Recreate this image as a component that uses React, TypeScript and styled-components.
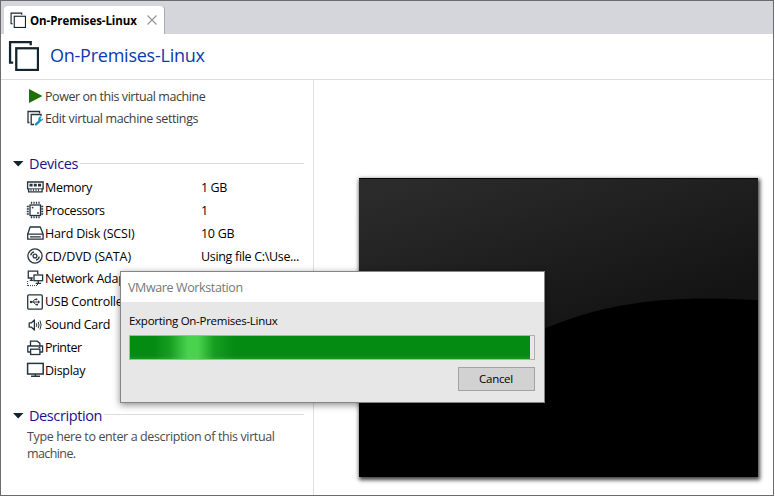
import React from "react";
import styled, { createGlobalStyle } from "styled-components";

const GlobalStyle = createGlobalStyle`
  *, *::before, *::after { box-sizing: border-box; }
  body { margin: 0; background: #fff; }
`;

const Window = styled.div`
  position: relative;
  display: flex;
  flex-direction: column;
  width: 774px;
  height: 496px;
  overflow: hidden;
  background: #fff;
  border: solid #6b6b6e;
  border-width: 1px;
  font-family: "Open Sans", "Noto Sans", sans-serif;
  color: #000;
`;

const Label = styled.span<{ $size?: number; $track?: number; $color?: string; $weight?: number }>`
  font-size: ${(p) => p.$size ?? 12.5}px;
  letter-spacing: ${(p) => p.$track ?? 0}px;
  color: ${(p) => p.$color ?? "inherit"};
  font-weight: ${(p) => p.$weight ?? 400};
  white-space: pre;
`;

const TabBar = styled.div`
  flex: none;
  height: 33px;
  padding: 5px 0 0 3px;
  background: #d5d6db;
`;

const Tab = styled.div`
  display: flex;
  align-items: center;
  width: 161px;
  height: 28px;
  padding-left: 6px;
  background: #fff;
  border-right: 1px solid #a9aaae;
  border-radius: 4px 4px 0 0;
`;

const TabTitle = styled.div`
  display: flex;
  width: 116px;
  margin-left: 4px;
  padding-top: 1px;
`;

const Header = styled.header`
  flex: none;
  display: flex;
  align-items: center;
  gap: 11px;
  height: 46px;
  padding: 0 0 2px 7px;
  border-bottom: 1px solid #dedede;
`;

const HeaderTitle = styled.h1`
  display: flex;
  margin: -1px 0 0;
  line-height: 28px;
`;

const Content = styled.div`
  flex: 1;
  display: flex;
`;

const Sidebar = styled.aside`
  width: 313px;
  padding-top: 5px;
  border-right: 1px solid #dfdfdf;
`;

const Action = styled.div`
  display: flex;
  align-items: center;
  height: 22px;
  padding-left: 25px;
`;

const IconSlot = styled.span`
  display: flex;
  flex: none;
  align-items: center;
  width: 19px;
  height: 20px;
`;

const Section = styled.section<{ $top: number }>`
  padding-top: ${(p) => p.$top}px;
`;

const SectionHead = styled.div`
  display: flex;
  align-items: center;
  height: 24px;
  padding: 0 9px 0 11px;
`;

const SectionName = styled.h2`
  display: flex;
  margin: 0 2px 0 5px;
  line-height: 22px;
`;

const Rule = styled.span`
  flex: 1;
  height: 1px;
  margin-top: -2px;
  background: #dcdcdc;
`;

const DeviceRow = styled.div`
  display: flex;
  align-items: center;
  height: 22.875px;
  padding-left: 25px;
`;

const DeviceName = styled.div`
  display: flex;
  width: 156px;
`;

const Note = styled.div`
  display: flex;
  flex-direction: column;
  padding: 0 0 0 26px;
  line-height: 17.5px;
`;

const Preview = styled.main`
  flex: 1;
  padding: 98px 0 0 45px;
`;

const Screen = styled.div`
  width: 399px;
  height: 299px;
  background: #000;
  box-shadow: 1px 2px 4px 1px rgba(0, 0, 0, 0.75);
`;

const Dialog = styled.div`
  position: absolute;
  left: 119px;
  top: 270px;
  width: 425px;
  height: 132px;
  background: #e7e7e7;
  border: 1px solid #858585;
  box-shadow: 0 2px 7px rgba(0, 0, 0, 0.45);
`;

const DialogTitle = styled.div`
  display: flex;
  align-items: center;
  height: 30px;
  padding-left: 7px;
  background: #fff;
`;

const DialogBody = styled.div`
  display: flex;
  flex-direction: column;
  padding: 8px 9px 0 8px;
`;

const Message = styled.div`
  display: flex;
  align-items: center;
  height: 20px;
  margin-bottom: 5px;
`;

const Track = styled.div`
  height: 25px;
  border: 1px solid #b0b0b0;
  background: #e8e8e8;
`;

const Fill = styled.div`
  height: 23px;
  width: 400px;
  background:
    linear-gradient(90deg, transparent 6%, rgba(77, 214, 81, 0.25) 10%, rgba(77, 214, 81, 0.95) 14.5%, rgba(77, 214, 81, 0.95) 17%, rgba(77, 214, 81, 0.25) 21%, transparent 26%),
    linear-gradient(#048b12 85%, #149a22);
`;

const CancelButton = styled.button`
  display: flex;
  align-items: center;
  justify-content: center;
  align-self: flex-end;
  width: 77px;
  height: 24px;
  margin-top: 7px;
  padding: 0 1px 1px 0;
  background: #d2d2d2;
  border: 1px solid #a3a3a3;
  color: #000;
  font-family: inherit;
`;

const ink = "#26343d";

const MachineIcon = ({ size, stroke }: { size: number; stroke: number }) => (
  <svg width={size} height={size} viewBox="0 0 30 30" fill="none" stroke="#14242e" strokeWidth={stroke}>
    <path d="M5 22H2V2h20v3" />
    <rect x="8" y="8" width="21" height="21" />
  </svg>
);

const Drawing = ({ children, h = 16 }: { children: React.ReactNode; h?: number }) => (
  <svg width="18" height={h} viewBox={`0 0 18 ${h}`} fill="none" stroke={ink} strokeWidth="1.3">
    {children}
  </svg>
);

const icons = {
  power: (
    <svg width="18" height="16" viewBox="0 0 18 16">
      <path d="M3 1L16.5 8L3 15Z" fill="#217005" />
    </svg>
  ),
  edit: (
    <Drawing>
      <path d="M3.5 12.5H2V1.5H13.5v2" />
      <path d="M8 14.5H5.2V4.5H15v1.5" />
      <path d="M10 14.5l4-4" stroke="#0c91bf" strokeWidth="2.4" strokeLinecap="round" />
      <path d="M17.2 8.3l-2 1.4-1-1 1.5-2c-2.6-.6-3.9 1.5-3.2 3.6 2 1.7 4.9.4 4.7-2z" fill="#0c91bf" stroke="none" />
    </Drawing>
  ),
  memory: (
    <Drawing>
      <path d="M1.6 3h15.5v6.8h-1v3h-13.5v-3h-1z" />
      <path d="M3.5 4.8h3.1v2.8H3.5zM7.8 4.8h3v2.8h-3zM12 4.8h3.1v2.8H12z" fill={ink} stroke="none" />
      <path d="M3 9.8h12.9M5 10v2M7.5 10v2M10 10v2M12.5 10v2" strokeWidth=".9" />
    </Drawing>
  ),
  cpu: (
    <Drawing h={18}>
      <rect x="4" y="4" width="10.5" height="10.5" />
      <path d="M5.5 .8v2M8 .8v2M10.5 .8v2M13 .8v2M5.5 15.2v2M8 15.2v2M10.5 15.2v2M13 15.2v2M.8 5.5h2M.8 8h2M.8 10.5h2M.8 13h2M15.2 5.5h2M15.2 8h2M15.2 10.5h2M15.2 13h2" />
      <circle cx="6.6" cy="6.6" r=".9" fill={ink} stroke="none" />
      <circle cx="12" cy="12" r=".9" fill={ink} stroke="none" />
    </Drawing>
  ),
  disk: (
    <Drawing>
      <path d="M1.7 9.2L4.1 2h10.2l2.8 7.2v5H1.7z" strokeLinejoin="round" />
      <path d="M1.7 9.2h15.4M4 11.8h10.8" />
    </Drawing>
  ),
  disc: (
    <Drawing>
      <circle cx="9" cy="8" r="7.1" />
      <circle cx="9" cy="8" r="1.9" />
      <path d="M4.7 7.3Q5.2 4.5 8 3.8M13.3 8.7Q12.8 11.5 10 12.2" />
    </Drawing>
  ),
  network: (
    <Drawing h={17}>
      <path d="M6.8 8H2.3V1.2h9.4v3" />
      <path d="M3.8 10.4h3.4M5.4 8v2.2" />
      <rect x="8" y="5" width="8.6" height="5.7" fill="#fff" />
      <path d="M12.3 10.8v2.4M9.7 13.3h5.4" />
      <path d="M1.6 11v5M2 15.6h9.8M11.5 14v2" strokeDasharray="1 1" strokeWidth="1" />
    </Drawing>
  ),
  usb: (
    <Drawing>
      <rect x="1.7" y=".8" width="14.6" height="14.4" rx="1.3" />
      <path d="M5 8h8M6.5 8l2-2.5H10M7.5 8l2 2.5h1.4" strokeWidth="1" />
      <circle cx="5" cy="8" r="1.2" fill={ink} stroke="none" />
      <path d="M12 6.3L14.2 8L12 9.7z" fill={ink} stroke="none" />
      <path d="M9.6 4.6h1.7v1.7H9.6zM10.3 9.7H12v1.7h-1.7z" fill={ink} stroke="none" />
    </Drawing>
  ),
  sound: (
    <Drawing>
      <path d="M3.2 5.8h2.3L8.4 3v10L5.5 10.2H3.2z" strokeLinejoin="round" />
      <path d="M10.3 6.2q1 1.8 0 3.6M12.2 4.9q1.6 3.1 0 6.2M14 3.6q2.2 4.4 0 8.8" strokeWidth="1" />
    </Drawing>
  ),
  printer: (
    <Drawing>
      <path d="M4.5 6V1.2h6.7l2.7 2.2V6" />
      <path d="M4.3 12H1.8V6h14.8v6h-2.7" strokeLinejoin="round" />
      <rect x="4.6" y="9.2" width="9.3" height="5.3" />
      <path d="M12.5 7.7h1.8" />
    </Drawing>
  ),
  display: (
    <Drawing>
      <rect x="1.6" y="1.4" width="15.6" height="10.6" strokeWidth="1.5" />
      <path d="M9.4 12v2M5 14.2h9" strokeWidth="1.5" />
    </Drawing>
  ),
};

const Arrow = () => (
  <svg width="12" height="8" viewBox="0 0 12 8">
    <path d="M1 1h10.5L6.2 6.5z" fill="#14242e" />
  </svg>
);

const devices: { icon: keyof typeof icons; name: string; value?: string; track: number; valueTrack?: number }[] = [
  { icon: "memory", name: "Memory", value: "1 GB", track: -0.3, valueTrack: -0.4 },
  { icon: "cpu", name: "Processors", value: "1", track: -0.4 },
  { icon: "disk", name: "Hard Disk (SCSI)", value: "10 GB", track: -0.2, valueTrack: -0.3 },
  { icon: "disc", name: "CD/DVD (SATA)", value: "Using file C:\\Use...", track: -0.1, valueTrack: -0.32 },
  { icon: "network", name: "Network Adapter", track: -0.2 },
  { icon: "usb", name: "USB Controller", track: -0.25 },
  { icon: "sound", name: "Sound Card", track: -0.3 },
  { icon: "printer", name: "Printer", track: -0.5 },
  { icon: "display", name: "Display", track: -0.3 },
];

export default function App() {
  return (
    <>
      <GlobalStyle />
      <Window>
        <TabBar>
          <Tab>
            <MachineIcon size={16} stroke={2.1} />
            <TabTitle>
              <Label $size={11.5} $weight={700} $track={-0.08} $color="#000">On-Premises-Linux</Label>
            </TabTitle>
            <svg width="12" height="12" viewBox="0 0 12 12" stroke="#969696" strokeWidth="1.2">
              <path d="M1.5 1.5l9 9M10.5 1.5l-9 9" />
            </svg>
          </Tab>
        </TabBar>
        <Header>
          <MachineIcon size={31} stroke={2.2} />
          <HeaderTitle>
            <Label $size={18} $track={-0.24} $color="#0b3bb0">On-Premises-Linux</Label>
          </HeaderTitle>
        </Header>
        <Content>
          <Sidebar>
            <Action>
              <IconSlot>{icons.power}</IconSlot>
              <Label $track={-0.44} $color="#3c3c3c">Power on this virtual machine</Label>
            </Action>
            <Action>
              <IconSlot>{icons.edit}</IconSlot>
              <Label $track={-0.38} $color="#3c3c3c">Edit virtual machine settings</Label>
            </Action>
            <Section $top={23}>
              <SectionHead>
                <Arrow />
                <SectionName>
                  <Label $size={14.5} $track={-0.35} $color="#1b1188">Devices</Label>
                </SectionName>
                <Rule />
              </SectionHead>
              {devices.map((d) => (
                <DeviceRow key={d.name}>
                  <IconSlot>{icons[d.icon]}</IconSlot>
                  <DeviceName>
                    <Label $track={d.track}>{d.name}</Label>
                  </DeviceName>
                  {d.value && <Label $track={d.valueTrack}>{d.value}</Label>}
                </DeviceRow>
              ))}
            </Section>
            <Section $top={22}>
              <SectionHead>
                <Arrow />
                <SectionName>
                  <Label $size={14.5} $track={-0.4} $color="#1b1188">Description</Label>
                </SectionName>
                <Rule />
              </SectionHead>
              <Note>
                <Label $track={-0.38} $color="#4a4a4a">Type here to enter a description of this virtual</Label>
                <Label $track={-0.6} $color="#4a4a4a">machine.</Label>
              </Note>
            </Section>
          </Sidebar>
          <Preview>
            <Screen>
              <svg width="399" height="299" viewBox="0 0 399 299" display="block">
                <defs>
                  <linearGradient id="gloss" gradientUnits="userSpaceOnUse" x1="60" y1="0" x2="120" y2="190">
                    <stop offset="0" stopColor="#2b2b2b" />
                    <stop offset="1" stopColor="#141414" />
                  </linearGradient>
                </defs>
                <path d="M0 0H399V122C315 117 250 123 187 150C140 171 100 190 60 220H0Z" fill="url(#gloss)" />
                <path d="M0 .5H399" stroke="#050505" />
              </svg>
            </Screen>
          </Preview>
        </Content>
        <Dialog role="dialog">
          <DialogTitle>
            <Label $track={-0.38} $color="#777">VMware Workstation</Label>
          </DialogTitle>
          <DialogBody>
            <Message>
              <Label $size={11.5} $track={-0.27} $color="#000">Exporting On-Premises-Linux</Label>
            </Message>
            <Track>
              <Fill />
            </Track>
            <CancelButton>
              <Label $size={11.5} $track={-0.3}>Cancel</Label>
            </CancelButton>
          </DialogBody>
        </Dialog>
      </Window>
    </>
  );
}
